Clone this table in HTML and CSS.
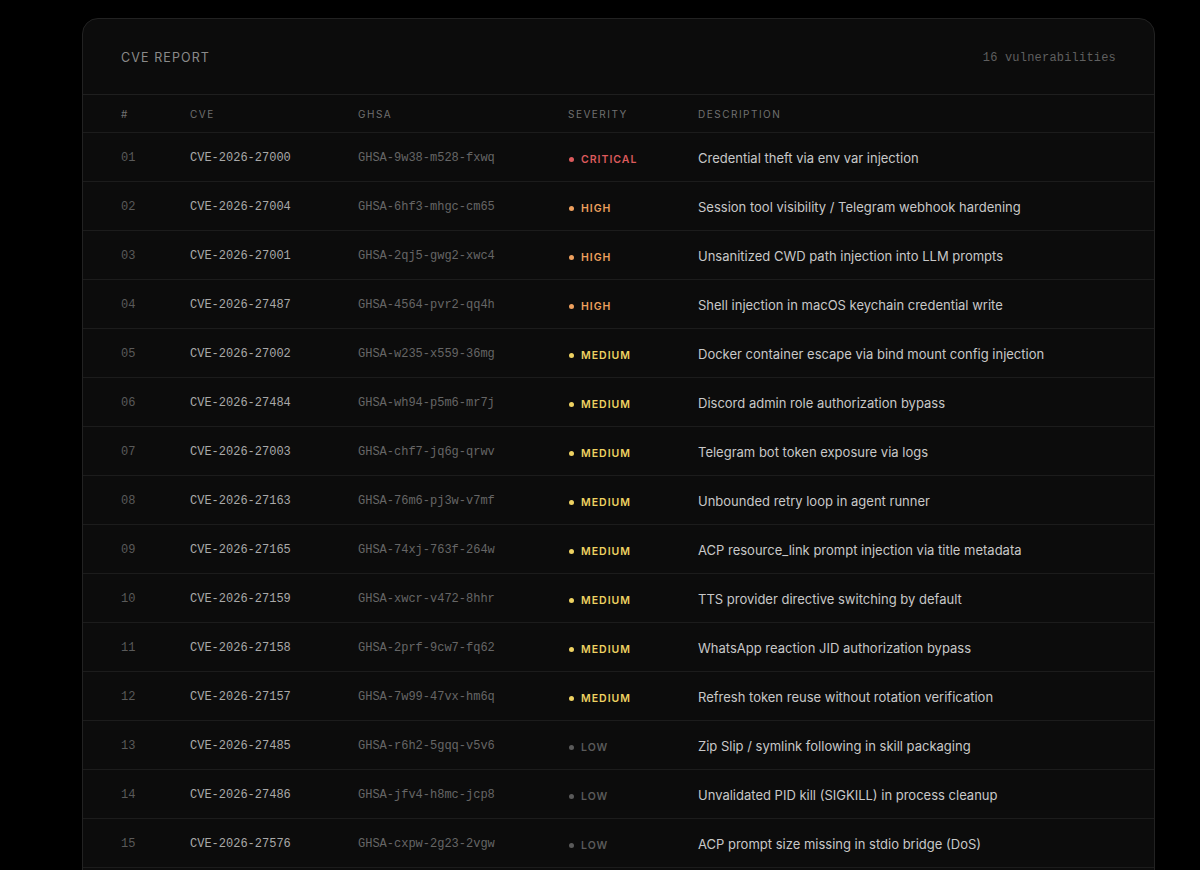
FILE: index.html
```html
<!DOCTYPE html>
<html lang="en">
<head>
<meta charset="utf-8">
<title>CVE Report</title>
<link rel="stylesheet" href="styles.css">
</head>
<body>
<div class="card">
  <div class="card-head">
    <div class="title">CVE REPORT</div>
    <div class="count">16 vulnerabilities</div>
  </div>
  <div class="row head">
    <div>#</div><div>CVE</div><div>GHSA</div><div>SEVERITY</div><div>DESCRIPTION</div>
  </div>
  <div class="row"><div class="num">01</div><div class="cve">CVE-2026-27000</div><div class="ghsa">GHSA-9w38-m528-fxwq</div><div class="sev critical">CRITICAL</div><div class="desc">Credential theft via env var injection</div></div>
  <div class="row"><div class="num">02</div><div class="cve">CVE-2026-27004</div><div class="ghsa">GHSA-6hf3-mhgc-cm65</div><div class="sev high">HIGH</div><div class="desc">Session tool visibility / Telegram webhook hardening</div></div>
  <div class="row"><div class="num">03</div><div class="cve">CVE-2026-27001</div><div class="ghsa">GHSA-2qj5-gwg2-xwc4</div><div class="sev high">HIGH</div><div class="desc">Unsanitized CWD path injection into LLM prompts</div></div>
  <div class="row"><div class="num">04</div><div class="cve">CVE-2026-27487</div><div class="ghsa">GHSA-4564-pvr2-qq4h</div><div class="sev high">HIGH</div><div class="desc">Shell injection in macOS keychain credential write</div></div>
  <div class="row"><div class="num">05</div><div class="cve">CVE-2026-27002</div><div class="ghsa">GHSA-w235-x559-36mg</div><div class="sev medium">MEDIUM</div><div class="desc">Docker container escape via bind mount config injection</div></div>
  <div class="row"><div class="num">06</div><div class="cve">CVE-2026-27484</div><div class="ghsa">GHSA-wh94-p5m6-mr7j</div><div class="sev medium">MEDIUM</div><div class="desc">Discord admin role authorization bypass</div></div>
  <div class="row"><div class="num">07</div><div class="cve">CVE-2026-27003</div><div class="ghsa">GHSA-chf7-jq6g-qrwv</div><div class="sev medium">MEDIUM</div><div class="desc">Telegram bot token exposure via logs</div></div>
  <div class="row"><div class="num">08</div><div class="cve">CVE-2026-27163</div><div class="ghsa">GHSA-76m6-pj3w-v7mf</div><div class="sev medium">MEDIUM</div><div class="desc">Unbounded retry loop in agent runner</div></div>
  <div class="row"><div class="num">09</div><div class="cve">CVE-2026-27165</div><div class="ghsa">GHSA-74xj-763f-264w</div><div class="sev medium">MEDIUM</div><div class="desc">ACP resource_link prompt injection via title metadata</div></div>
  <div class="row"><div class="num">10</div><div class="cve">CVE-2026-27159</div><div class="ghsa">GHSA-xwcr-v472-8hhr</div><div class="sev medium">MEDIUM</div><div class="desc">TTS provider directive switching by default</div></div>
  <div class="row"><div class="num">11</div><div class="cve">CVE-2026-27158</div><div class="ghsa">GHSA-2prf-9cw7-fq62</div><div class="sev medium">MEDIUM</div><div class="desc">WhatsApp reaction JID authorization bypass</div></div>
  <div class="row"><div class="num">12</div><div class="cve">CVE-2026-27157</div><div class="ghsa">GHSA-7w99-47vx-hm6q</div><div class="sev medium">MEDIUM</div><div class="desc">Refresh token reuse without rotation verification</div></div>
  <div class="row"><div class="num">13</div><div class="cve">CVE-2026-27485</div><div class="ghsa">GHSA-r6h2-5gqq-v5v6</div><div class="sev low">LOW</div><div class="desc">Zip Slip / symlink following in skill packaging</div></div>
  <div class="row"><div class="num">14</div><div class="cve">CVE-2026-27486</div><div class="ghsa">GHSA-jfv4-h8mc-jcp8</div><div class="sev low">LOW</div><div class="desc">Unvalidated PID kill (SIGKILL) in process cleanup</div></div>
  <div class="row"><div class="num">15</div><div class="cve">CVE-2026-27576</div><div class="ghsa">GHSA-cxpw-2g23-2vgw</div><div class="sev low">LOW</div><div class="desc">ACP prompt size missing in stdio bridge (DoS)</div></div>
  <div class="row"><div class="num">16</div><div class="cve">CVE-2026-27577</div><div class="ghsa">GHSA-8x2m-4k7p-wq9r</div><div class="sev low">LOW</div><div class="desc">Unchecked input length in config loader</div></div>
</div>
</body>
</html>
```

FILE: styles.css
```css
* { box-sizing: border-box; }
html, body { margin: 0; padding: 0; background: #000; }
body {
  padding: 18px 0 0 82px;
  font-family: Inter, "Liberation Sans", sans-serif;
  color: #ccc;
}
.card {
  width: 1073px;
  background: #0c0c0c;
  border: 1px solid #222;
  border-radius: 16px;
  overflow: hidden;
}
.card-head {
  height: 76px;
  padding: 0 38px;
  display: flex;
  align-items: center;
  justify-content: space-between;
  border-bottom: 1px solid #1f1f1f;
}
.title {
  font-size: 12.5px;
  letter-spacing: 1.1px;
  color: #8a8a8a;
  padding-top: 2px;
}
.count {
  font-family: "Liberation Mono", "DejaVu Sans Mono", monospace;
  font-size: 12px;
  letter-spacing: 0.2px;
  color: #5f5f5f;
  padding-top: 2px;
}
.row {
  display: grid;
  grid-template-columns: 69px 168px 210px 130px 1fr;
  align-items: center;
  height: 49px;
  padding: 0 38px;
  border-bottom: 1px solid #1c1c1c;
}
.row.head {
  height: 38px;
  font-size: 10px;
  letter-spacing: 1.5px;
  color: #707070;
  padding-top: 1px;
}
.num, .cve, .ghsa {
  font-family: "Liberation Mono", "DejaVu Sans Mono", monospace;
  font-size: 12px;
  padding-top: 1px;
}
.num { color: #5a5a5a; }
.cve { color: #a9a9a9; }
.ghsa { color: #666; }
.sev {
  font-size: 10.5px;
  font-weight: 600;
  letter-spacing: 1px;
  display: flex;
  align-items: center;
  padding-top: 4px;
}
.sev::before {
  content: "";
  width: 5px;
  height: 5px;
  border-radius: 50%;
  background: currentColor;
  margin-right: 7px;
  margin-left: 1px;
}
.critical { color: #dc5a5c; }
.high { color: #eea05e; }
.medium { color: #eed262; }
.low { color: #5a5a5a; }
.desc {
  font-size: 13px;
  color: #c8c8c8;
  padding-top: 1px;
}
```
